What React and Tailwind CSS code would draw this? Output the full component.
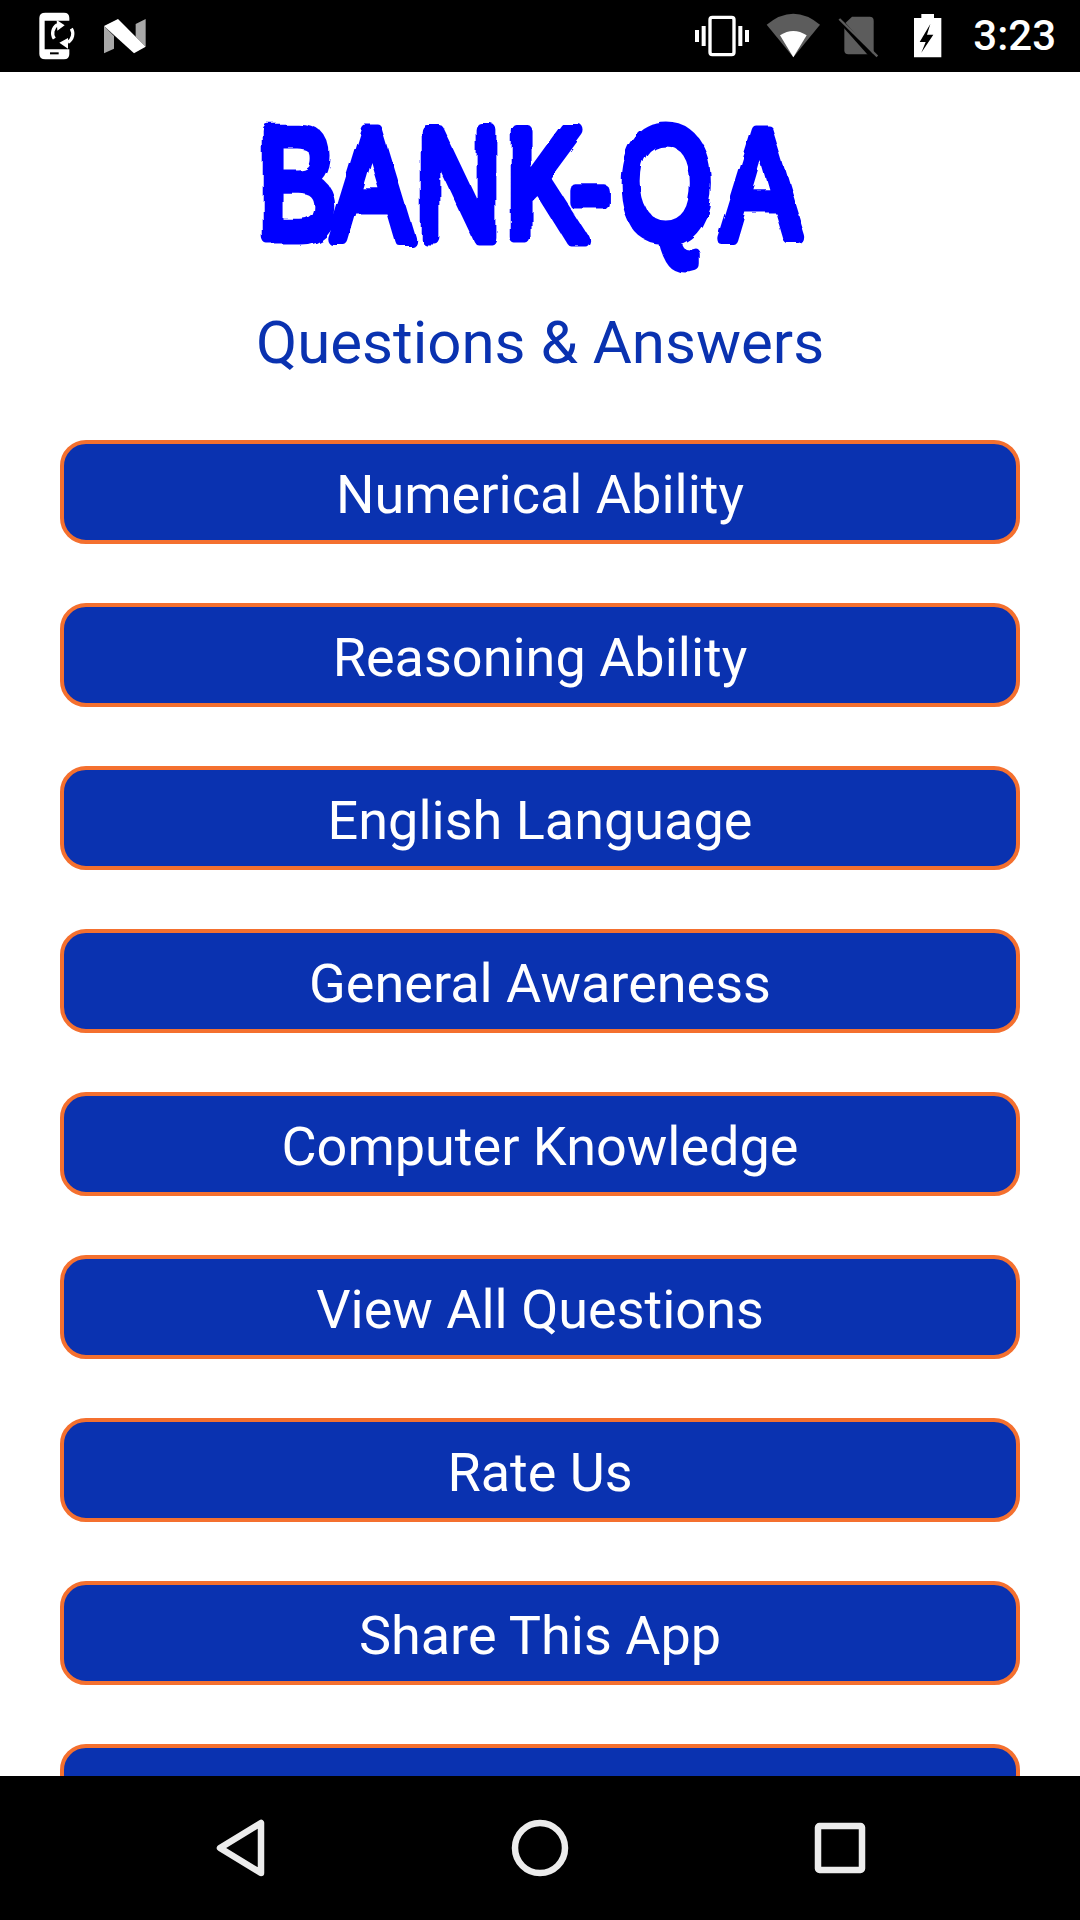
const labels = ["Numerical Ability","Reasoning Ability","English Language","General Awareness","Computer Knowledge","View All Questions","Rate Us","Share This App",""];

function StatusLeft() {
  return (
    <div className="flex">
      <svg className="ml-[36px] h-[72px] w-[42px]" viewBox="108 0 126 216">
        <path fill="#fff" d="M136 38H192Q208 38 208 54V62H134V148H208V162Q208 178 192 178H136Q118 178 118 162V54Q118 38 136 38Z" />
        <rect x="150" y="157" width="26" height="6" fill="#000" />
        <path fill="none" stroke="#fff" strokeWidth="10" d="M172 76A30 30 0 0 0 163 118M204 129A30 30 0 0 0 214 88" transform="translate(0 -2)" />
        <path fill="#fff" d="M170 60L194 76L172 92ZM204 146L178 128L204 114Z" />
      </svg>
      <svg className="ml-[23px] h-[72px] w-[48px]" viewBox="306 0 144 216">
        <path fill="#a8a8a8" d="M315 78L345 108V146L315 160ZM440 57V140L410 110V72Z" />
        <path fill="#fff" d="M315 78L357 57L440 140L405 160Z" />
      </svg>
    </div>
  );
}

function StatusRight() {
  return (
    <div className="flex items-center pr-[24px]">
      <svg className="h-[72px] w-[60px]" viewBox="66 0 180 216">
        <rect x="120" y="52" width="72" height="112" rx="7" fill="none" stroke="#fff" strokeWidth="10" />
        <path fill="#fff" d="M95 78H107V138H95ZM75 90H87V126H75ZM205 78H217V138H205ZM225 90H237V126H225Z" />
      </svg>
      <svg className="ml-[13px] h-[72px] w-[58px]" viewBox="285 0 174 216">
        <path fill="#5c5c5c" d="M290 74Q370 8 450 74L370 172Z" />
        <path fill="#fff" d="M330 106Q370 80 410 106L370 172Z" />
      </svg>
      <svg className="ml-[14px] h-[72px] w-[44px]" viewBox="500 0 132 216">
        <path fill="#5c5c5c" d="M545 50H598Q610 50 610 62V163H534Q522 163 522 151V72Z" />
        <path fill="none" stroke="#000" strokeWidth="14" d="M496 46L610 174" />
        <path fill="none" stroke="#5c5c5c" strokeWidth="7" d="M507 57L621 169" />
      </svg>
      <svg className="ml-[31px] h-[72px] w-[32px]" viewBox="727 0 96 216">
        <path fill="#fff" fillRule="evenodd" d="M755 42H793V54H815V172H733V54H755ZM782 72L750 126H768L755 158L791 104H772Z" />
      </svg>
      <span className="ml-[29px] text-[42px] leading-[72px] font-medium text-white">3:23</span>
    </div>
  );
}

function NavBar() {
  return (
    <div className="flex h-[144px] shrink-0 items-center justify-center gap-[240px] bg-black">
      <svg className="h-[60px] w-[60px]" viewBox="0 0 60 60" fill="none" stroke="#ececec" strokeWidth="6.5" strokeLinejoin="round">
        <path d="M10 30L51 5V55Z" />
      </svg>
      <svg className="h-[60px] w-[60px]" viewBox="0 0 60 60" fill="none" stroke="#ececec" strokeWidth="6.5">
        <circle cx="30" cy="30" r="25" />
      </svg>
      <svg className="h-[60px] w-[60px]" viewBox="0 0 60 60" fill="none" stroke="#ececec" strokeWidth="6.5" strokeLinejoin="round">
        <rect x="8" y="8" width="44" height="44" rx="1.5" />
      </svg>
    </div>
  );
}

function Logo() {
  const sx = 0.76;
  const xs = [258, 332, 416, 506, 570, 620, 722].map((v) => v / sx).join(" ");
  return (
    <svg className="ml-[240px] mt-[18px] block h-[190px] w-[600px]" viewBox="240 90 600 190">
      <defs>
        <filter id="rough" x="-5%" y="-10%" width="110%" height="120%">
          <feTurbulence type="fractalNoise" baseFrequency="0.035" numOctaves="2" seed="4" />
          <feDisplacementMap in="SourceGraphic" scale="9" />
        </filter>
      </defs>
      <g filter="url(#rough)">
        <text
          transform={`scale(${sx} 1)`}
          x={xs}
          y="238"
          fontFamily="'Liberation Sans', sans-serif"
          fontSize="155"
          fill="#0000ff"
          stroke="#0000ff"
          strokeWidth="13"
          strokeLinejoin="round"
        >
          BANK-QA
        </text>
      </g>
    </svg>
  );
}

export default function App() {
  return (
    <div className="flex h-[1920px] w-[1080px] flex-col overflow-hidden bg-white font-['Roboto',sans-serif]">
      <div className="flex h-[72px] shrink-0 justify-between bg-black">
        <StatusLeft />
        <StatusRight />
      </div>
      <main className="min-h-0 flex-1 overflow-hidden">
        <Logo />
        <h1 className="mt-[28px] text-center text-[60px] leading-[70px] font-normal text-[#0a32b0]">Questions &amp; Answers</h1>
        <div className="mt-[62px] flex flex-col gap-[59px] px-[60px]">
          {labels.map((l, i) => (
            <button key={i} className="flex h-[104px] shrink-0 items-center justify-center rounded-[26px] border-[4px] border-[#f4702f] bg-[#0a32b0] pt-[5px] text-[54px] leading-none text-white">
              {l}
            </button>
          ))}
        </div>
      </main>
      <NavBar />
    </div>
  );
}
